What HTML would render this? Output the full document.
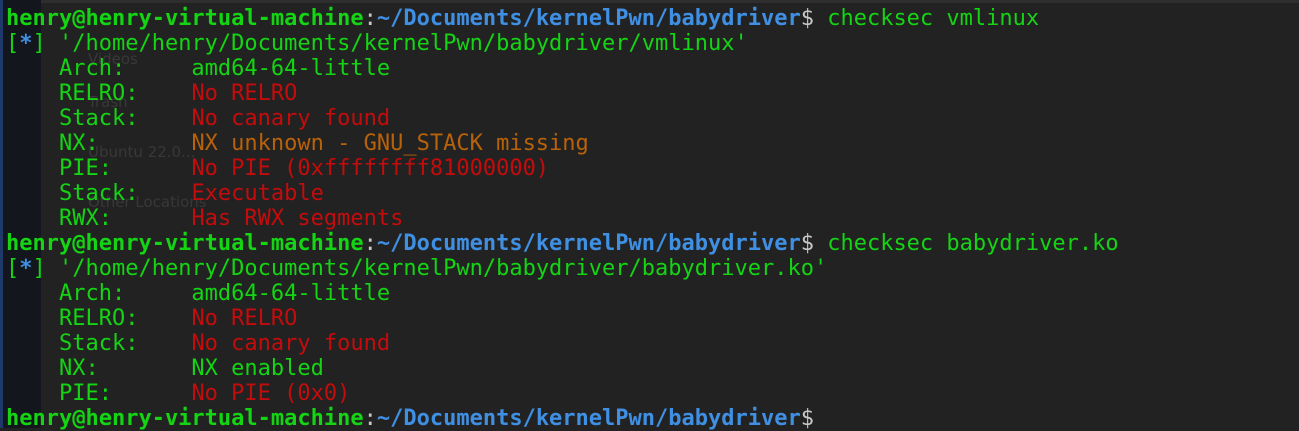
<!DOCTYPE html>
<html><head><meta charset="utf-8"><style>
html,body{margin:0;padding:0;width:1299px;height:428px;overflow:hidden;background:#222222;}
.left{position:absolute;left:0;top:0;width:41px;height:428px;background:#13171d;}
.left:before{content:"";position:absolute;left:0;top:0;width:3px;height:428px;background:#1f3a6a;}
.topbar{position:absolute;left:41px;top:0;width:1258px;height:3px;background:#2e2e2e;}
.ghost{position:absolute;font-family:"DejaVu Sans","Liberation Sans",sans-serif;font-size:15px;color:#383838;}
pre{position:absolute;left:6px;top:6px;margin:0;font-family:"DejaVu Sans Mono","Liberation Mono",monospace;font-size:22px;line-height:25.02px;color:#14d414;}
.b{font-weight:bold;}
.g{color:#14d414}.bl{color:#3f8fe3}.w{color:#c8c8c8}.r{color:#c40c0c}.o{color:#b8620a}
</style></head><body>
<div class="left"></div><div class="topbar"></div>
<div class="ghost" style="left:88px;top:50px">Videos</div>
<div class="ghost" style="left:88px;top:93px">Trash</div>
<div class="ghost" style="left:88px;top:143px">Ubuntu 22.0...</div>
<div class="ghost" style="left:88px;top:193px">Other Locations</div>
<pre><span class="b g">henry@henry-virtual-machine</span><span class="w">:</span><span class="b bl">~/Documents/kernelPwn/babydriver</span><span class="w">$</span> checksec vmlinux
[<span class="b bl">*</span>] '/home/henry/Documents/kernelPwn/babydriver/vmlinux'
    Arch:     amd64-64-little
    RELRO:    <span class="r">No RELRO</span>
    Stack:    <span class="r">No canary found</span>
    NX:       <span class="o">NX unknown - GNU_STACK missing</span>
    PIE:      <span class="r">No PIE (0xffffffff81000000)</span>
    Stack:    <span class="r">Executable</span>
    RWX:      <span class="r">Has RWX segments</span>
<span class="b g">henry@henry-virtual-machine</span><span class="w">:</span><span class="b bl">~/Documents/kernelPwn/babydriver</span><span class="w">$</span> checksec babydriver.ko
[<span class="b bl">*</span>] '/home/henry/Documents/kernelPwn/babydriver/babydriver.ko'
    Arch:     amd64-64-little
    RELRO:    <span class="r">No RELRO</span>
    Stack:    <span class="r">No canary found</span>
    NX:       NX enabled
    PIE:      <span class="r">No PIE (0x0)</span>
<span class="b g">henry@henry-virtual-machine</span><span class="w">:</span><span class="b bl">~/Documents/kernelPwn/babydriver</span><span class="w">$</span></pre>
</body></html>
